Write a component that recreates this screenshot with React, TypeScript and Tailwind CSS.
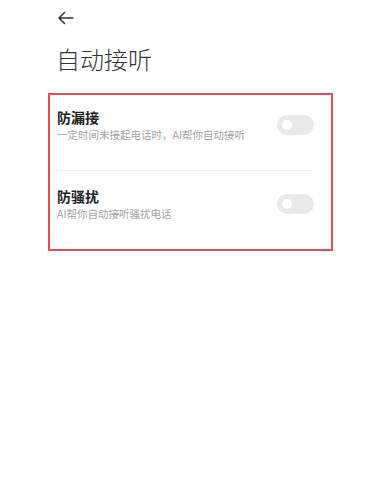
import React from "react";

function Toggle() {
  return (
    <div className="w-[37px] h-[20px] rounded-full bg-[#e9e9e9] flex items-center pl-[5px] shrink-0">
      <div className="w-[10px] h-[10px] rounded-full bg-white" />
    </div>
  );
}

export default function App() {
  return (
    <div
      className="w-[369px] h-[492px] bg-white relative"
      style={{ fontFamily: '"Noto Sans CJK SC", "Noto Sans", sans-serif' }}
    >
      <div className="pl-[57px] pt-[10px] h-[16px] box-content flex items-center">
        <svg width="17" height="14" viewBox="0 0 17 14" fill="none">
          <path d="M16 7H2M7.5 1.5L2 7l5.5 5.5" stroke="#333" strokeWidth="1.5" strokeLinecap="round" strokeLinejoin="round" />
        </svg>
      </div>
      <div className="pl-[56px] mt-[17px] text-[24px] leading-[32px] font-light text-[#333]">自动接听</div>
      <div className="ml-[48px] mt-[18px] w-[285px] h-[158px] border-2 border-[#ef4a4a] pl-[7px] pr-[17px] flex flex-col">
        <div className="h-[60px] flex items-center justify-between">
          <div className="flex flex-col">
            <div className="text-[14px] leading-[18px] font-bold text-[#222]">防漏接</div>
            <div className="text-[10.5px] leading-[15px] text-[#a3a3a3] mt-[1px]">一定时间未接起电话时，AI帮你自动接听</div>
          </div>
          <Toggle />
        </div>
        <div className="mt-[15px] ml-[-1px] w-[256px] h-px bg-[#efefef]" />
        <div className="h-[65px] flex items-center justify-between">
          <div className="flex flex-col">
            <div className="text-[14px] leading-[18px] font-bold text-[#222]">防骚扰</div>
            <div className="text-[10.5px] leading-[15px] text-[#a3a3a3] mt-[1px]">AI帮你自动接听骚扰电话</div>
          </div>
          <Toggle />
        </div>
      </div>
    </div>
  );
}
